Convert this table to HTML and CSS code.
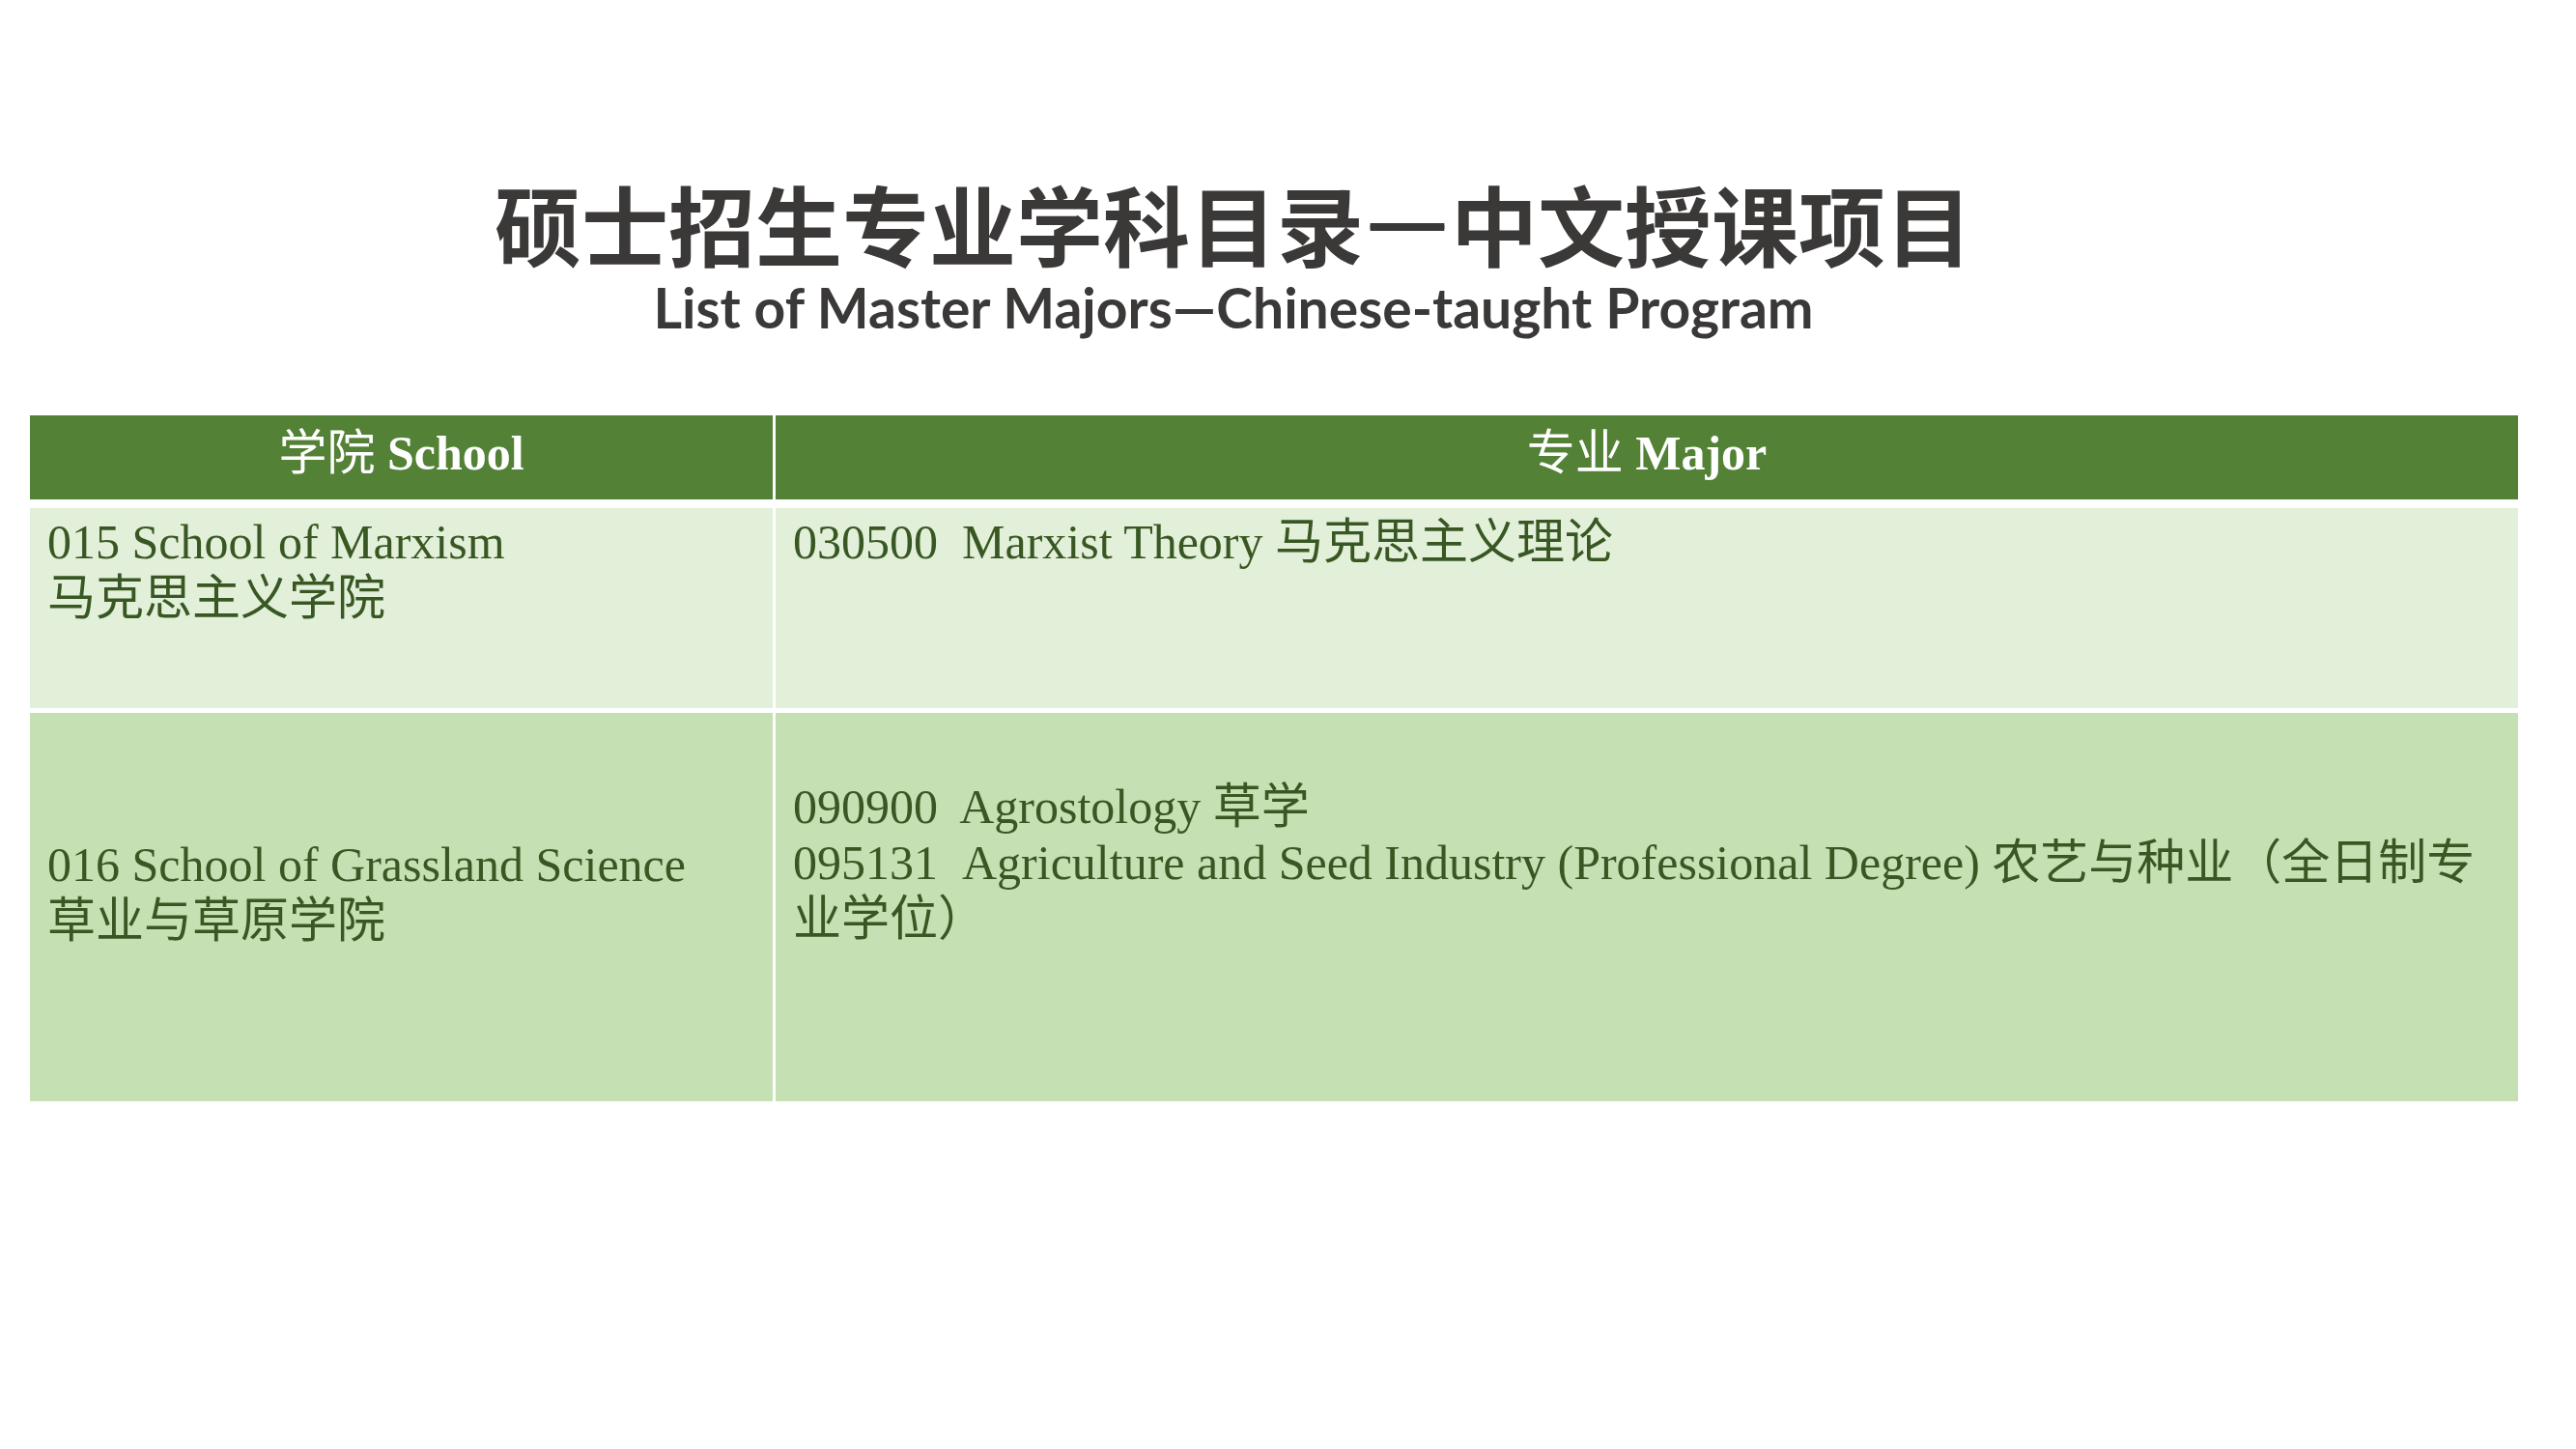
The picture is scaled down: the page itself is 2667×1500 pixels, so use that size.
FILE: index.html
```html
<!DOCTYPE html>
<html lang="zh-CN">
<head>
<meta charset="utf-8">
<title>硕士招生专业学科目录—中文授课项目</title>
<link rel="stylesheet" href="styles.css">
</head>
<body>
<div class="page">
  <header class="heading">
    <h1 class="title">硕士招生专业学科目录<span class="dash">—</span>中文授课项目</h1>
    <p class="subtitle">List of Master Majors—Chinese-taught Program</p>
  </header>
  <div class="tbl">
    <div class="row head">
      <div class="cell">学院 <b>School</b></div>
      <div class="cell">专业 <b>Major</b></div>
    </div>
    <div class="row r1">
      <div class="cell">015 School of Marxism<br>马克思主义学院</div>
      <div class="cell">030500&nbsp; Marxist Theory 马克思主义理论</div>
    </div>
    <div class="row r2">
      <div class="cell c1">016 School of Grassland Science<br>草业与草原学院</div>
      <div class="cell c2">090900&nbsp; Agrostology 草学<br>095131&nbsp; Agriculture and Seed Industry (Professional Degree) 农艺与种业（全日制专业学位）</div>
    </div>
  </div>
</div>
</body>
</html>
```

FILE: styles.css
```css
html, body {
  margin: 0;
  padding: 0;
  background: #ffffff;
}
.page {
  width: 2667px;
  height: 1500px;
  overflow: hidden;
}
.heading {
  padding: 182px 113px 0 0;
  text-align: center;
  margin-bottom: 80px;
}
.title {
  margin: 0;
  font-family: "Noto Sans CJK SC", sans-serif;
  font-weight: 700;
  font-size: 90px;
  line-height: 96px;
  color: #3b3838;
}
.dash {
  text-shadow: 0 2px 0 #3b3838, 0 -2px 0 #3b3838;
}
.subtitle {
  margin: 8px 0 0;
  font-family: Lato, "Noto Sans", sans-serif;
  font-weight: 700;
  font-size: 57px;
  line-height: 64px;
  color: #3b3838;
}
.tbl {
  margin-left: 31px;
  width: 2576px;
  display: flex;
  flex-direction: column;
  font-family: "Liberation Serif", "Noto Sans CJK SC", serif;
  font-size: 50px;
  line-height: 58px;
  color: #385723;
}
.row {
  display: grid;
  grid-template-columns: 769px 1fr;
  column-gap: 3px;
}
.cell {
  padding: 6px 18px 0;
}
.head {
  height: 87px;
  margin-bottom: 9px;
}
.head .cell {
  background: #538135;
  color: #ffffff;
  text-align: center;
  padding: 10px 0 0;
}
.head b {
  font-weight: 700;
}
.r1 {
  height: 207px;
  margin-bottom: 5px;
}
.r1 .cell {
  background: #e2efd9;
}
.r2 {
  height: 402px;
}
.r2 .cell {
  background: #c5e0b3;
}
.r2 .c1 {
  padding-top: 128px;
}
.r2 .c2 {
  padding-top: 68px;
}
```
